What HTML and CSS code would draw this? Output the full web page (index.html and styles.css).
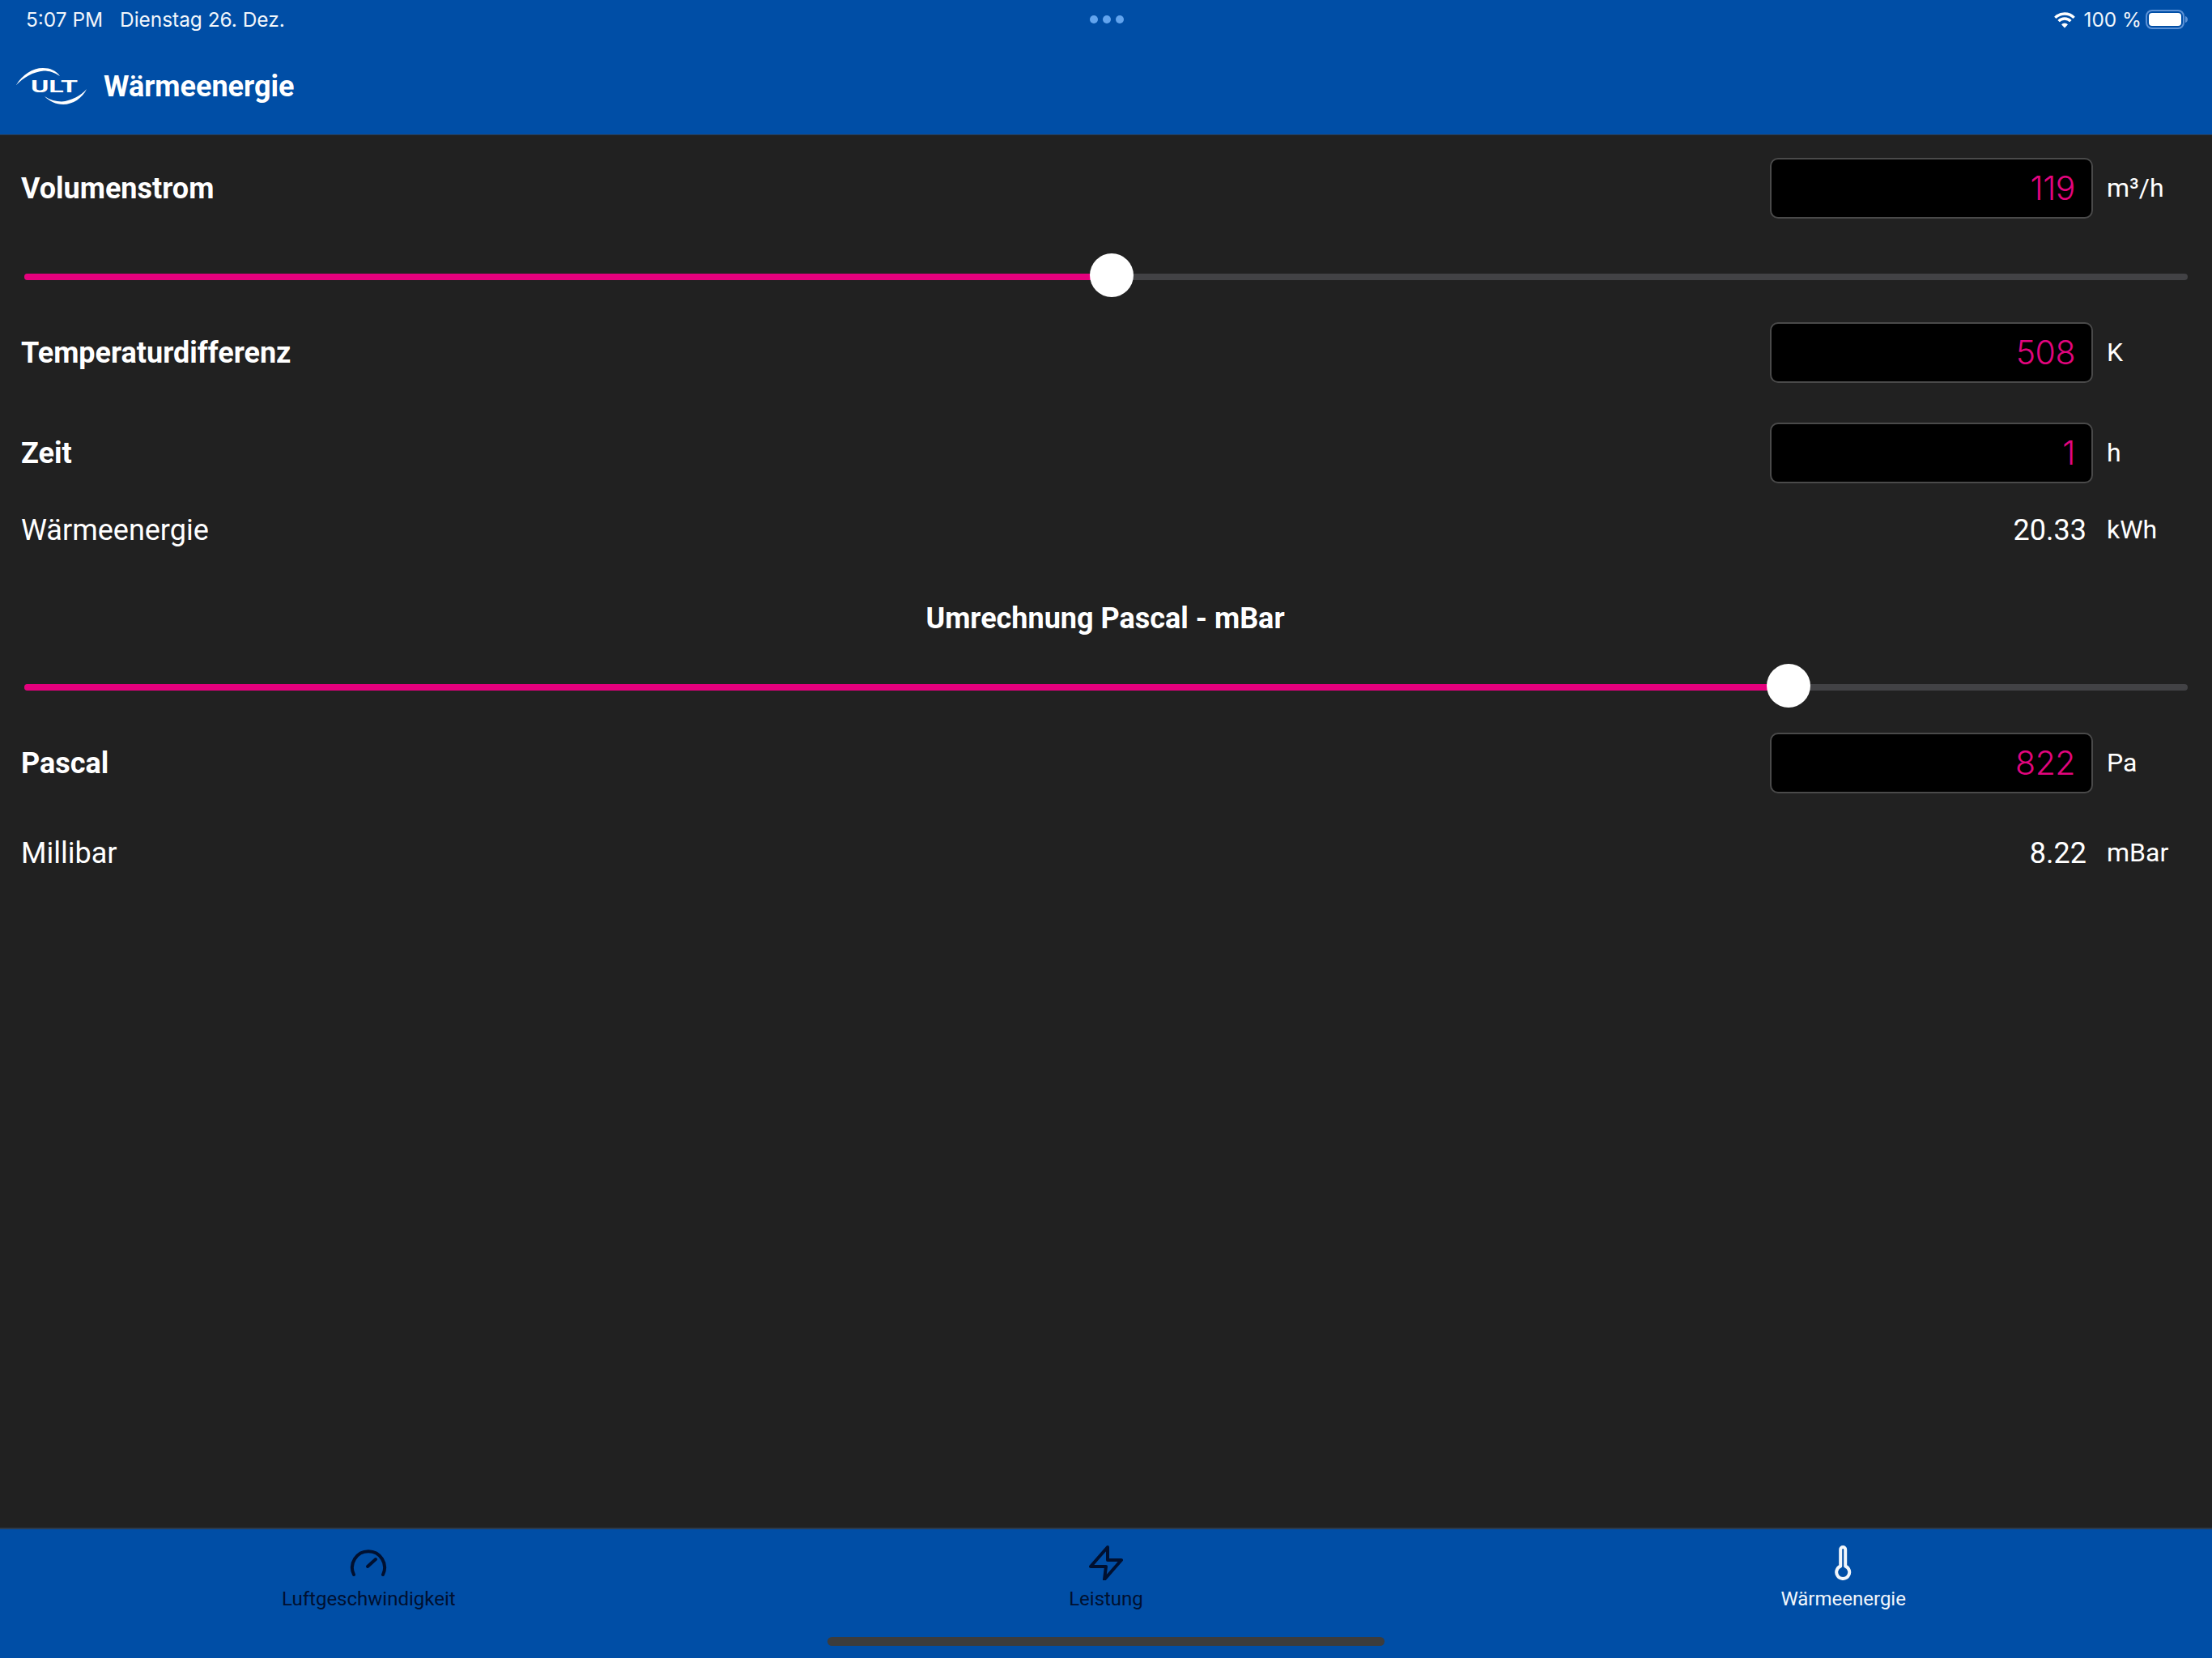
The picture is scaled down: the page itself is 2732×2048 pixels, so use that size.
FILE: index.html
```html
<!DOCTYPE html>
<html lang="de">
<head>
<meta charset="utf-8">
<title>Wärmeenergie</title>
<link rel="stylesheet" href="styles.css">
</head>
<body>
<div class="app">
  <header class="header">
    <div class="status">
      <div class="status-left"><span>5:07 PM</span><span>Dienstag 26. Dez.</span></div>
      <div class="dots"><i></i><i></i><i></i></div>
      <div class="status-right">
        <svg class="wifi" width="26" height="21" viewBox="0 0 26 21"><g fill="none" stroke="#fff" stroke-width="3.400"><path d="M1.330 7.830A16.500 16.500 0 0 1 24.670 7.830"/><path d="M5.580 12.080A10.500 10.500 0 0 1 20.420 12.080"/></g><path d="M13 20.500L9 16.300A5.600 5.600 0 0 1 17 16.300Z" fill="#fff"/></svg>
        <span class="pct">100 %</span>
        <svg class="battery" width="52" height="24" viewBox="0 0 52 24"><rect x="1" y="1" width="46" height="22" rx="7" fill="none" stroke="#5d92d6" stroke-width="2"/><rect x="4" y="4" width="40" height="16" rx="4" fill="#fff"/><path d="M49 8c1.800.5 3 2.200 3 4s-1.200 3.500-3 4z" fill="#5d92d6"/></svg>
      </div>
    </div>
    <div class="appbar">
      <svg class="logo" width="90" height="46" viewBox="0 0 90 46">
        <path d="M0 21C8 8 20 0 33 0C42 0 49 3 54 10C47 5.500 41 3.500 34 3.500C21 4.500 9 12 0 21Z" fill="#fff"/>
        <path d="M87 26C82 37 70 45 58 45C49 45 41 41 35 35C42 39.500 49 41.500 56 41.500C68 40.500 80 34 87 26Z" fill="#fff"/>
        <text x="18" y="30" class="logo-text" textLength="58" lengthAdjust="spacingAndGlyphs">ULT</text>
      </svg>
      <h1 class="title">Wärmeenergie</h1>
    </div>
  </header>

  <main class="content">
    <div class="row first">
      <div class="label strong">Volumenstrom</div>
      <div class="box">119</div>
      <div class="unit">m³/h</div>
    </div>
    <div class="slider slider-a">
      <div class="track"><div class="fill" style="width:1343px"></div></div>
      <div class="thumb" style="left:1316px"></div>
    </div>
    <div class="row">
      <div class="label strong">Temperaturdifferenz</div>
      <div class="box">508</div>
      <div class="unit">K</div>
    </div>
    <div class="row row-zeit">
      <div class="label strong">Zeit</div>
      <div class="box">1</div>
      <div class="unit">h</div>
    </div>
    <div class="row row-result">
      <div class="label">Wärmeenergie</div>
      <div class="value">20.33</div>
      <div class="unit">kWh</div>
    </div>
    <h2 class="heading">Umrechnung Pascal - mBar</h2>
    <div class="slider slider-b">
      <div class="track"><div class="fill" style="width:2179px"></div></div>
      <div class="thumb" style="left:2152px"></div>
    </div>
    <div class="row row-pascal">
      <div class="label strong">Pascal</div>
      <div class="box">822</div>
      <div class="unit">Pa</div>
    </div>
    <div class="row row-milli">
      <div class="label">Millibar</div>
      <div class="value">8.22</div>
      <div class="unit">mBar</div>
    </div>
  </main>

  <nav class="tabs">
    <div class="tab">
      <svg width="50" height="44" viewBox="0 0 50 44" fill="none" stroke="currentColor" stroke-width="4" stroke-linecap="round"><path d="M7 37A20 20 0 1 1 43 37"/><path d="M24 27l10-9"/></svg>
      <span>Luftgeschwindigkeit</span>
    </div>
    <div class="tab">
      <svg width="50" height="44" viewBox="0 0 50 44" fill="none" stroke="currentColor" stroke-width="4" stroke-linejoin="round" stroke-linecap="round"><path d="M27 3L6 27H25L23 43L44 19H27Z"/></svg>
      <span>Leistung</span>
    </div>
    <div class="tab active">
      <svg width="50" height="44" viewBox="0 0 50 44" fill="none" stroke="currentColor" stroke-width="4" stroke-linejoin="round"><path d="M21.200 6a3 3 0 0 1 6 0V26.600a8 8 0 1 1-6 0Z"/></svg>
      <span>Wärmeenergie</span>
    </div>
    <div class="home-bar"></div>
  </nav>
</div>
</body>
</html>
```
FILE: styles.css
```css
* { box-sizing: border-box; }
html, body { margin: 0; padding: 0; }
body { background: #212121; font-family: Roboto, "Liberation Sans", sans-serif; color: #fff; }
.app { width: 2732px; height: 2048px; display: flex; flex-direction: column; overflow: hidden; }

.header { height: 167px; background: #004ea6; border-bottom: 1px solid #2c3a4c; flex: none; }
.status { height: 48px; padding: 0 30px 0 32px; display: grid; grid-template-columns: 1fr auto 1fr; align-items: center; font-family: Inter, "Liberation Sans", sans-serif; font-size: 24.4px; color: #f2f6fb; }
.status-left { display: flex; gap: 21px; }
.dots { display: flex; gap: 6px; }
.dots i { width: 10px; height: 10px; border-radius: 50%; background: #62a4ee; }
.status-right { display: flex; justify-content: flex-end; align-items: center; }
.pct { margin: 0 5px 0 10px; }
.appbar { height: 118px; padding: 0 0 0 20px; display: flex; align-items: center; }
.logo { flex: none; margin-right: 18px; }
.logo-text { font-family: Roboto, sans-serif; font-weight: 700; font-size: 21px; fill: #fff; }
.title { margin: 0; font-size: 36px; font-weight: 700; line-height: 1; color: #fff; }

.content { flex: 1; padding: 28px 30px 0 26px; }
.row { display: grid; grid-template-columns: 1fr 399px 100px; column-gap: 17px; align-items: center; min-height: 75px; }
.label { font-size: 36px; line-height: 40px; }
.strong { font-weight: 700; }
.box { height: 75px; background: #000; border: 2px solid #4a4a4a; border-radius: 10px; color: #e2057e; font-family: Inter, Roboto, sans-serif; font-weight: 300; font-size: 41px; letter-spacing: -0.5px; line-height: 71px; text-align: right; padding-right: 20px; }
.unit { font-size: 32px; line-height: 38px; padding-bottom: 2px; }
.value { font-size: 36px; line-height: 40px; text-align: right; padding-right: 8px; }

.slider { position: relative; height: 54px; margin-left: 4px; width: 2672px; }
.slider-a { margin-top: 43px; margin-bottom: 31px; }
.slider-b { margin-top: 36px; margin-bottom: 31px; }
.track { position: absolute; left: 0; right: 0; top: 25px; height: 8px; border-radius: 4px; background: #424245; overflow: hidden; }
.fill { height: 100%; background: #e5007d; }
.thumb { position: absolute; top: 0; width: 54px; height: 54px; border-radius: 50%; background: #fff; }

.row-zeit { margin-top: 49px; }
.row-result { min-height: 40px; margin-top: 38px; }
.heading { margin: 69px 0 0; padding-left: 2px; font-size: 36px; line-height: 40px; font-weight: 700; text-align: center; }
.row-milli { min-height: 40px; margin-top: 54px; }

.tabs { position: relative; height: 161px; flex: none; background: #004ea6; border-top: 2px solid #2c3a4c; display: grid; grid-template-columns: repeat(3, 1fr); align-items: start; padding-top: 19px; }
.tab { display: flex; flex-direction: column; align-items: center; color: #001030; font-size: 24px; line-height: 30px; gap: 8px; }
.tab.active { color: #f2f6fb; }
.home-bar { position: absolute; left: 1022px; top: 133px; width: 688px; height: 11px; border-radius: 6px; background: #3c3c3c; }
```
